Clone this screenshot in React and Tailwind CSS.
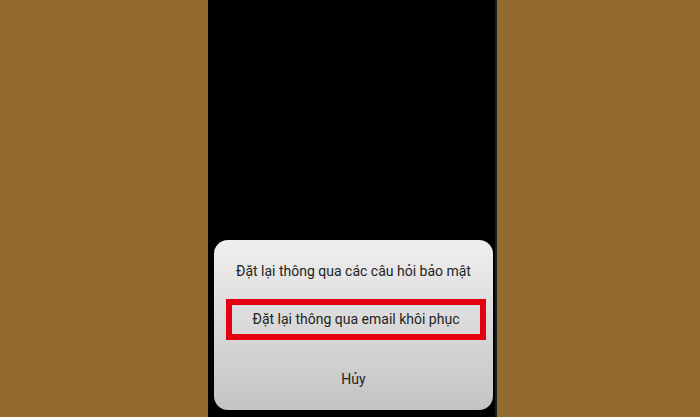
export default function App() {
  return (
    <div className="w-[700px] h-[417px] bg-[#936a30] flex pl-[208px] overflow-hidden" style={{ fontFamily: "Roboto, 'Noto Sans', sans-serif" }}>
      <div className="w-[289px] h-full bg-black border-r-2 border-[#1c1c1c] flex flex-col justify-end pl-[6px] pr-[2px] pb-[7px]">
        <div className="h-[170px] rounded-[14px] bg-gradient-to-b from-[#efefef] to-[#c4c4c4] flex flex-col text-[#232323]">
          <div className="h-[59px] pt-[4px] flex items-center justify-center text-[14px]">
            Đặt lại thông qua các câu hỏi bảo mật
          </div>
          <div className="h-[41px] ml-[12px] mr-[7px] border-[6px] border-[#e6000f] flex items-center justify-center text-[14px]">
            Đặt lại thông qua email khôi phục
          </div>
          <div className="flex-1 pt-[8px] flex items-center justify-center text-[14px]">
            Hủy
          </div>
        </div>
      </div>
    </div>
  );
}
